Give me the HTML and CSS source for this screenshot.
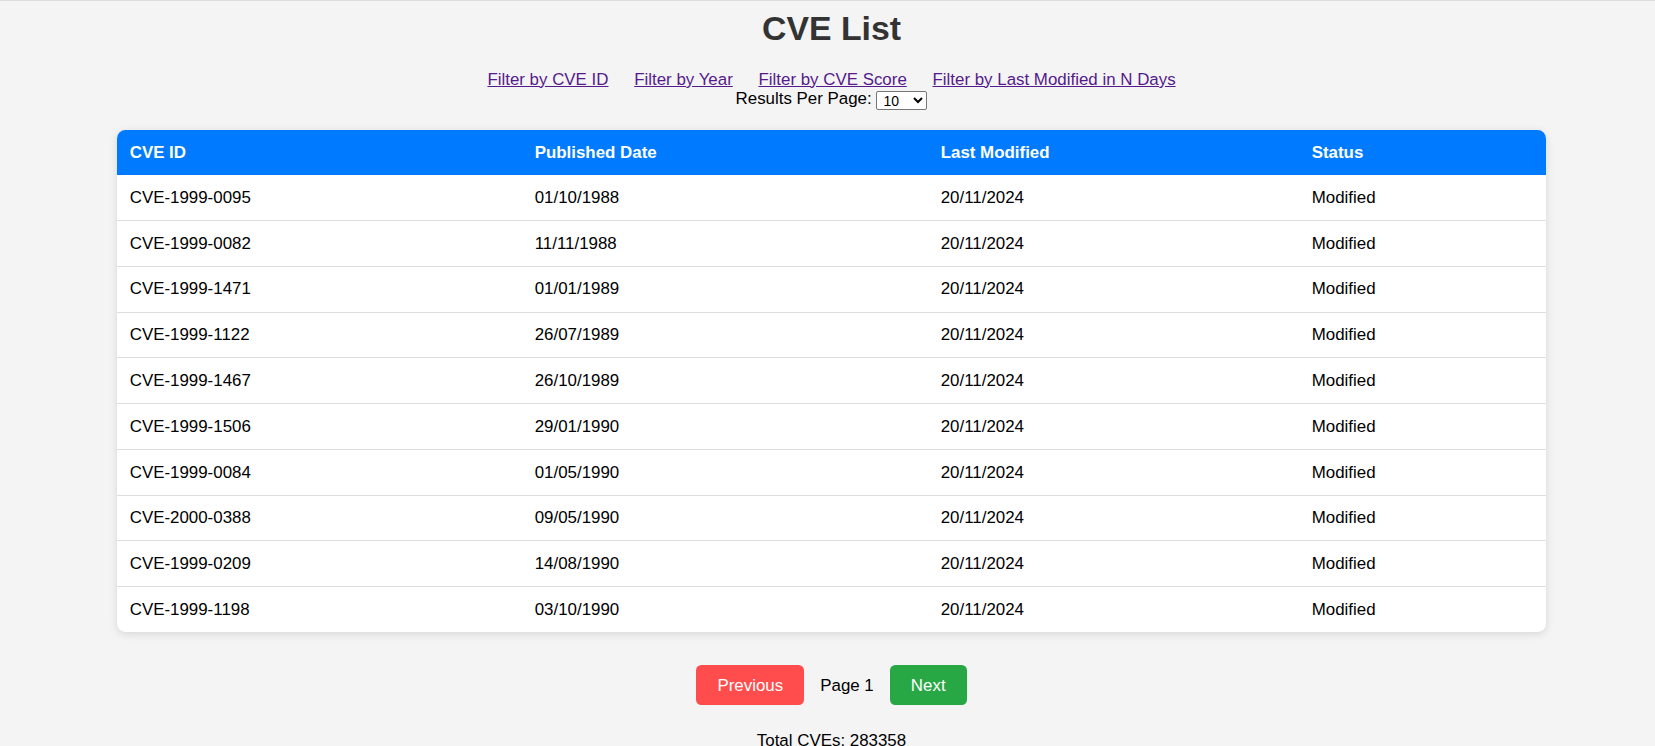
FILE: index.html
```html
<!DOCTYPE html>
<html lang="en">
<head>
<meta charset="utf-8">
<title>CVE List</title>
<link rel="stylesheet" href="styles.css">
</head>
<body>
  <h1 class="title">CVE List</h1>
  <div class="filters">
    <div class="filter-links">
      <a class="filter-link" href="#">Filter by CVE ID</a>
      <a class="filter-link" href="#">Filter by Year</a>
      <a class="filter-link" href="#">Filter by CVE Score</a>
      <a class="filter-link" href="#">Filter by Last Modified in N Days</a>
    </div>
    <div class="per-page">
      <label for="rpp">Results Per Page:</label>
      <select id="rpp" class="per-page-select">
        <option selected>10</option>
        <option>25</option>
        <option>50</option>
        <option>100</option>
      </select>
    </div>
  </div>

  <div class="table-card">
    <table class="cve-table">
      <thead>
        <tr>
          <th class="col-id">CVE ID</th>
          <th class="col-pub">Published Date</th>
          <th class="col-mod">Last Modified</th>
          <th class="col-status">Status</th>
        </tr>
      </thead>
      <tbody>
        <tr><td>CVE-1999-0095</td><td>01/10/1988</td><td>20/11/2024</td><td>Modified</td></tr>
        <tr><td>CVE-1999-0082</td><td>11/11/1988</td><td>20/11/2024</td><td>Modified</td></tr>
        <tr><td>CVE-1999-1471</td><td>01/01/1989</td><td>20/11/2024</td><td>Modified</td></tr>
        <tr><td>CVE-1999-1122</td><td>26/07/1989</td><td>20/11/2024</td><td>Modified</td></tr>
        <tr><td>CVE-1999-1467</td><td>26/10/1989</td><td>20/11/2024</td><td>Modified</td></tr>
        <tr><td>CVE-1999-1506</td><td>29/01/1990</td><td>20/11/2024</td><td>Modified</td></tr>
        <tr><td>CVE-1999-0084</td><td>01/05/1990</td><td>20/11/2024</td><td>Modified</td></tr>
        <tr><td>CVE-2000-0388</td><td>09/05/1990</td><td>20/11/2024</td><td>Modified</td></tr>
        <tr><td>CVE-1999-0209</td><td>14/08/1990</td><td>20/11/2024</td><td>Modified</td></tr>
        <tr><td>CVE-1999-1198</td><td>03/10/1990</td><td>20/11/2024</td><td>Modified</td></tr>
      </tbody>
    </table>
  </div>

  <div class="pagination">
    <button class="btn btn-prev" type="button">Previous</button>
    <span class="page-label">Page 1</span>
    <button class="btn btn-next" type="button">Next</button>
  </div>

  <p class="total">Total CVEs: 283358</p>
</body>
</html>
```

FILE: styles.css
```css
html {
  border-top: 1px solid #dcdcdc;
  background: #f4f4f4;
}

body {
  margin: 8px 0 0 8px;
  font-family: "Liberation Sans", Arial, sans-serif;
  font-size: 16.9px;
  color: #000;
  background: #f4f4f4;
}

.title {
  margin: 0 0 22px;
  text-align: center;
  font-size: 33.8px;
  font-weight: bold;
  color: #333;
  line-height: 38.8px;
}

.filters {
  text-align: center;
  margin-bottom: 21px;
}

.filter-links {
  line-height: 19.4px;
}

.filter-link {
  color: #551a8b;
  text-decoration: underline;
  margin: 0 10.5px;
}

.per-page {
  line-height: 19.4px;
  height: 20px;
}

.per-page-select {
  font-family: "Liberation Sans", Arial, sans-serif;
  font-size: 14px;
  width: 51px;
  height: 19px;
  padding: 0 0 0 2px;
  vertical-align: -2px;
  background: #fff;
  border: 1px solid #767676;
  border-radius: 2px;
  color: #000;
}

.table-card {
  width: 1429px;
  margin: 0 auto;
  background: #fff;
  border-radius: 8.4px;
  overflow: hidden;
  box-shadow: 0 2px 8px rgba(0, 0, 0, 0.12);
}

.cve-table {
  width: 100%;
  border-collapse: collapse;
  table-layout: fixed;
}

.cve-table th,
.cve-table td {
  box-sizing: border-box;
  padding: 12.7px 12.7px;
  text-align: left;
  line-height: 19.4px;
}

.cve-table th {
  background: #007bff;
  color: #fff;
  font-weight: bold;
  padding-top: 12.8px;
  padding-bottom: 12.8px;
}

.cve-table td {
  border-bottom: 1px solid #dedede;
}

.cve-table tbody tr:last-child td {
  border-bottom: none;
}

.col-id { width: 405px; }
.col-pub { width: 406px; }
.col-mod { width: 371px; }
.col-status { width: 247px; }

.pagination {
  display: flex;
  justify-content: center;
  align-items: center;
  gap: 16px;
  margin-top: 33px;
}

.btn {
  font-family: "Liberation Sans", Arial, sans-serif;
  font-size: 16.9px;
  line-height: 19.4px;
  padding: 10.5px 21.1px;
  border: none;
  border-radius: 5.3px;
  color: #fff;
  cursor: pointer;
}

.btn-prev {
  background: #ff4d4d;
}

.btn-next {
  background: #28a745;
}

.page-label {
  line-height: 19.4px;
}

.total {
  text-align: center;
  margin: 26px 0 0;
  line-height: 19.4px;
}
```
